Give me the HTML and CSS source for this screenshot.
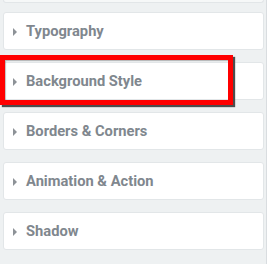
FILE: index.html
```html
<!DOCTYPE html>
<html lang="en">
  <head>
    <meta charset="UTF-8" />
    <meta name="viewport" content="width=device-width, initial-scale=1.0" />
    <title>Style sections</title>
    <link rel="stylesheet" href="styles.css">
  </head>
  <body>
    <main class="panel">
      <div class="tail"></div>
      <section class="section">
        <span class="arrow"></span>
        <h2>Typography</h2>
      </section>
      <section class="section">
        <span class="arrow"></span>
        <h2>Background Style</h2>
      </section>
      <section class="section">
        <span class="arrow"></span>
        <h2>Borders &amp; Corners</h2>
      </section>
      <section class="section">
        <span class="arrow"></span>
        <h2>Animation &amp; Action</h2>
      </section>
      <section class="section">
        <span class="arrow"></span>
        <h2>Shadow</h2>
      </section>
      <div class="highlight"></div>
    </main>
  </body>
</html>
```

FILE: styles.css
```css
* {
  margin: 0;
  padding: 0;
  box-sizing: border-box;
}

body {
  background: #ffffff;
  font-family: Roboto, "Liberation Sans", sans-serif;
}

/* Panel lateral con fondo gris claro y una línea a la derecha */
.panel {
  position: relative;
  width: 267px;
  height: 264px;
  padding: 0 2px 0 3px;
  background: #eef1f2;
  border-right: 1px solid #d9dde0;
  display: flex;
  flex-direction: column;
}

/* Final de la sección anterior, cortada arriba */
.tail {
  height: 3px;
  background: #f6f8f8;
  border: 1px solid #e2e6e8;
  border-top: none;
  border-radius: 0 0 3px 3px;
  margin-bottom: 9px;
}

.section {
  height: 38px;
  background: #ffffff;
  border: 1px solid #e2e6e8;
  border-radius: 3px;
  display: flex;
  align-items: center;
  padding-left: 9px;
  margin-bottom: 12px;
}

.arrow {
  width: 0;
  height: 0;
  border-top: 4px solid transparent;
  border-bottom: 4px solid transparent;
  border-left: 4px solid #8d9297;
  margin-right: 9px;
  margin-top: 1px;
}

.section h2 {
  font-size: 14.7px;
  font-weight: 700;
  color: #80878e;
}

/* Recuadro rojo que marca la sección */
.highlight {
  position: absolute;
  left: 0;
  top: 55px;
  width: 233px;
  height: 50px;
  border: 5px solid #ff0000;
  box-shadow: 2px 2px 1px #4d4d4d, inset 1px 1px 1px rgba(0, 0, 0, 0.25);
}
```
